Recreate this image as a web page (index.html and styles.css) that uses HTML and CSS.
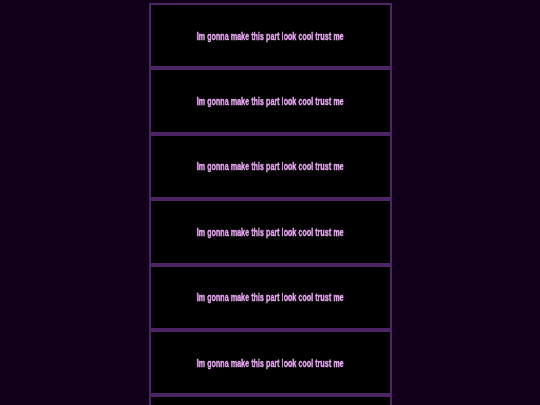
FILE: index.html
```html
<!DOCTYPE html>
<html lang="en">
<head>
    <meta charset="UTF-8">
    <title>cool page</title>
    <link rel="stylesheet" href="styles.css">
</head>
<body>
<div class="list">
    <div class="box"><p>Im gonna make this part look cool trust me</p></div>
    <div class="box"><p>Im gonna make this part look cool trust me</p></div>
    <div class="box"><p>Im gonna make this part look cool trust me</p></div>
    <div class="box"><p>Im gonna make this part look cool trust me</p></div>
    <div class="box"><p>Im gonna make this part look cool trust me</p></div>
    <div class="box"><p>Im gonna make this part look cool trust me</p></div>
    <div class="box"><p>Im gonna make this part look cool trust me</p></div>
</div>
</body>
</html>
```

FILE: styles.css
```css
*{
    margin:0;
    padding:0;
    box-sizing:border-box;
}
body{
    background-color:#12001b;
    font-family:"Liberation Sans",Arial,sans-serif;
}
.list{
    width:45%;
    margin:0 auto;
    padding-top:3px;
}
.box{
    display:flex;
    align-items:center;
    justify-content:center;
    height:65.4px;
    border:2px solid #4d2466;
    background-color:#000;
}
.box p{
    font-size:11px;
    font-weight:bold;
    color:#eaa8f4;
    -webkit-text-stroke:0.35px #eaa8f4;
    white-space:nowrap;
    transform:scaleX(0.655);
    will-change:transform;
}
```
